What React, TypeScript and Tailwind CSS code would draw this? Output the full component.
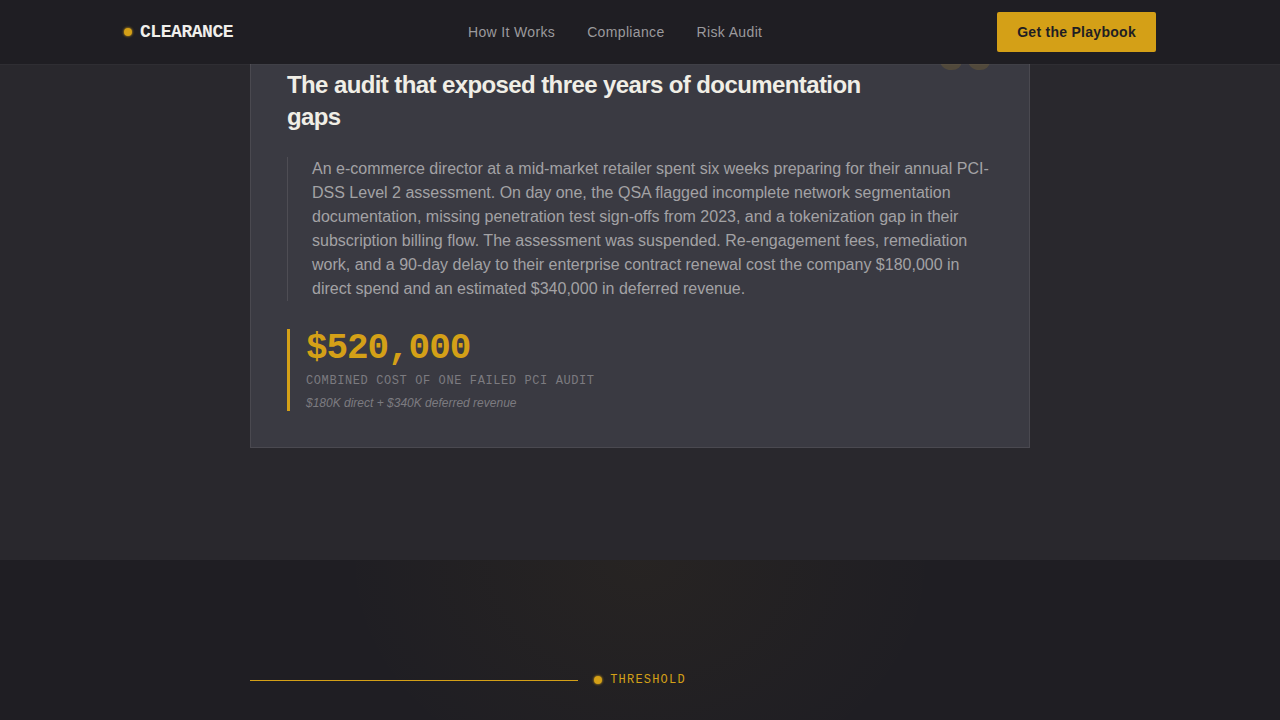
import React from 'react'

const links = [
    { label: 'How It Works', href: '#how' },
    { label: 'Compliance', href: '#compliance' },
    { label: 'Risk Audit', href: '#audit' },
]

function Dot() {
    return <span className="w-2 h-2 shrink-0 rounded-full bg-[#d4a017] shadow-[0_0_2px_1px_#d4a01780]"></span>
}

function Header() {
    return <header className="fixed inset-x-0 top-0 z-10 bg-[#1f1e23] bg-clip-padding border-b border-white/3">
        <div className="max-w-[1080px] h-16 mx-auto px-6 flex items-center justify-between">
            <a href="#" className="flex items-center gap-2 font-['Liberation_Mono',monospace] text-lg font-bold tracking-tight text-[#f0efeb]">
                <Dot />
                CLEARANCE
            </a>
            <nav className="flex gap-8">
                {links.map((link) => (
                    <a key={link.label} href={link.href} className="text-sm tracking-wide text-[#9b9a9d]">{link.label}</a>
                ))}
            </nav>
            <button type="button" className="h-10 px-5 rounded-xs bg-[#d4a017] text-sm font-bold tracking-[0.02em] text-[#1f1e23]">Get the Playbook</button>
        </div>
    </header>
}

function CaseStudy() {
    return <section className="bg-[#29282d] pt-8 pb-28">
        <article className="relative max-w-[780px] mx-auto p-9 bg-[#3a3a42] border border-[#4a4950]">
            <span aria-hidden="true" className="absolute -top-6 right-8 font-['Liberation_Serif',serif] text-[128px] leading-none font-bold text-[#d4a017] opacity-15">“</span>
            <h2 className="max-w-[620px] text-2xl leading-8 font-bold tracking-tight text-[#f0eee6]">The audit that exposed three years of documentation gaps</h2>
            <blockquote className="mt-6 pl-6 border-l border-[#4e4d54] text-base leading-6 text-[#a3a2a5]">
                An e-commerce director at a mid-market retailer spent six weeks preparing for their annual PCI-DSS Level 2 assessment. On day one, the QSA flagged incomplete network segmentation documentation, missing penetration test sign-offs from 2023, and a tokenization gap in their subscription billing flow. The assessment was suspended. Re-engagement fees, remediation work, and a 90-day delay to their enterprise contract renewal cost the company $180,000 in direct spend and an estimated $340,000 in deferred revenue.
            </blockquote>
            <div className="mt-7 pl-4 border-l-3 border-[#d4a017]">
                <p className="font-['Liberation_Mono',monospace] text-4xl leading-10 font-bold tracking-[-0.03em] text-[#d4a017]">$520,000</p>
                <p className="mt-1 font-['Liberation_Mono',monospace] text-xs leading-4 tracking-wider uppercase text-[#7c7b80]">Combined cost of one failed PCI audit</p>
                <p className="mt-1.5 text-xs leading-4 italic text-[#7c7b80]">$180K direct + $340K deferred revenue</p>
            </div>
        </article>
    </section>
}

function Threshold() {
    return <section className="flex-1 bg-[#1f1e23] bg-[radial-gradient(ellipse_300px_240px_at_50%_0%,#d4a0170b,transparent)] pt-28 pb-8">
        <div className="max-w-[780px] mx-auto flex items-center gap-4">
            <div className="flex-1 h-px bg-[#d4a017]"></div>
            <div className="flex items-center gap-2 font-['Liberation_Mono',monospace] text-xs tracking-widest uppercase text-[#d4a017]">
                <Dot />
                Threshold
            </div>
            <div className="flex-1"></div>
        </div>
    </section>
}

function App() {
    return <div className="min-h-screen flex flex-col font-['Liberation_Sans',Arial,sans-serif]">
        <Header />
        <CaseStudy />
        <Threshold />
    </div>
}

export default App
